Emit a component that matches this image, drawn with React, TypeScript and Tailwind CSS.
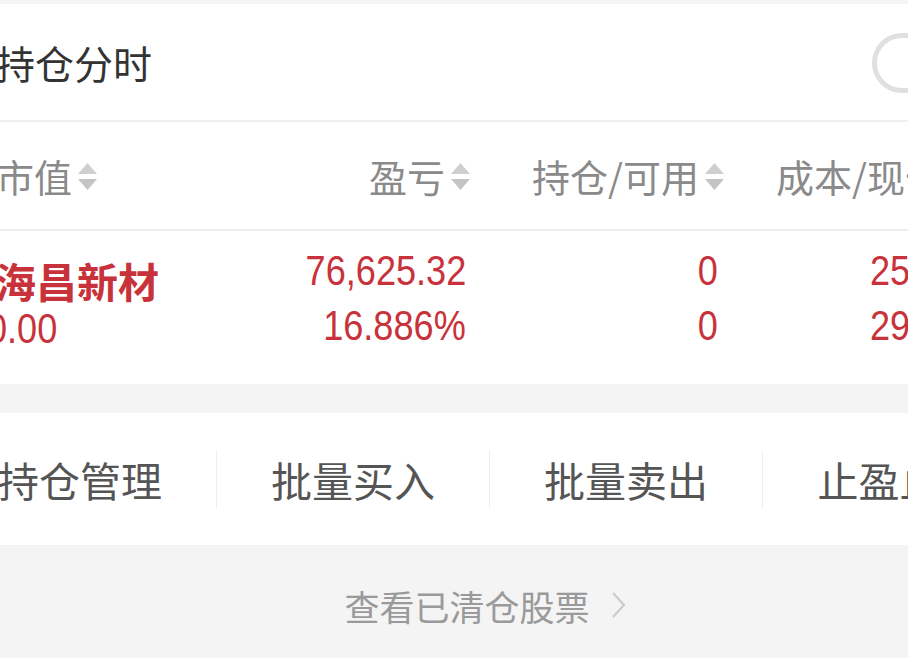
import React from "react";

const CJK = '"Noto Sans CJK SC", "Noto Sans", sans-serif';
const NUM = '"Liberation Sans", Arial, sans-serif';

function SortArrows() {
  return (
    <span className="inline-flex flex-col items-center gap-[5px] ml-[6px] mt-[2px]">
      <svg width="19" height="11" viewBox="0 0 19 11">
        <polygon points="9.5,0 19,11 0,11" fill="#cfcfcf" />
      </svg>
      <svg width="19" height="11" viewBox="0 0 19 11">
        <polygon points="0,0 19,0 9.5,11" fill="#c4c4c4" />
      </svg>
    </span>
  );
}

function HeaderCell({ label, className }: { label: string; className: string }) {
  return (
    <div className={`flex items-center shrink-0 ${className}`}>
      <span>{label}</span>
      <SortArrows />
    </div>
  );
}

function Num({ children, origin }: { children: React.ReactNode; origin: string }) {
  return (
    <span
      className={`inline-block whitespace-nowrap scale-x-[0.84] ${origin}`}
      style={{ fontFamily: NUM }}
    >
      {children}
    </span>
  );
}

export default function App() {
  return (
    <div
      className="w-[908px] h-[658px] overflow-hidden bg-[#f4f4f4] flex flex-col"
      style={{ fontFamily: CJK }}
    >
      <div className="h-[4px] shrink-0" />
      {/* 持仓分时 */}
      <div className="h-[116px] shrink-0 bg-white flex items-center justify-between border-b-2 border-[#efefef] box-content">
        <span className="text-[39px] leading-none text-[#333] ml-[-4px] whitespace-nowrap">持仓分时</span>
        <div className="w-[110px] h-[60px] rounded-full border-[5px] border-[#e0e0e0] bg-white shrink-0 mr-[-74px] mt-[2px]" />
      </div>

      {/* header */}
      <div className="h-[107px] shrink-0 bg-white flex items-center text-[38px] leading-none text-[#8a8a8a] border-b-2 border-[#ededed] box-content whitespace-nowrap">
        <HeaderCell label="市值" className="w-[200px] ml-[-4px]" />
        <HeaderCell label="盈亏" className="w-[274px] justify-end" />
        <HeaderCell label="持仓/可用" className="w-[254px] justify-end" />
        <div className="shrink-0 ml-[52px]">成本/现价</div>
      </div>

      {/* data row */}
      <div className="h-[153px] shrink-0 bg-white flex text-[#c8323a]">
        <div className="w-[200px] shrink-0 flex flex-col ml-[-5px]">
          <div className="mt-[29px] text-[41px] leading-none font-semibold whitespace-nowrap">
            海昌新材
          </div>
          <div className="mt-[2px] ml-[-8px] text-[43px] leading-none">
            <Num origin="origin-left">0.00</Num>
          </div>
        </div>
        <div className="w-[271px] shrink-0 flex flex-col items-end text-[43px] leading-none">
          <div className="mt-[14px]"><Num origin="origin-right">76,625.32</Num></div>
          <div className="mt-[8px]"><Num origin="origin-right">16.886%</Num></div>
        </div>
        <div className="w-[252px] shrink-0 flex flex-col items-end text-[43px] leading-none">
          <div className="mt-[14px]"><Num origin="origin-right">0</Num></div>
          <div className="mt-[8px]"><Num origin="origin-right">0</Num></div>
        </div>
        <div className="shrink-0 ml-[152px] flex flex-col text-[43px] leading-none">
          <div className="mt-[14px]"><Num origin="origin-left">25.11</Num></div>
          <div className="mt-[8px]"><Num origin="origin-left">29.35</Num></div>
        </div>
      </div>

      <div className="h-[29px] shrink-0" />

      {/* actions */}
      <div className="h-[132px] shrink-0 bg-white flex items-center ml-[-56px] w-[1092px]">
        {["持仓管理", "批量买入", "批量卖出", "止盈止损"].map((t, i) => (
          <div key={t} className="w-[273px] h-full shrink-0 flex items-center">
            <span className="flex-1 text-center text-[41px] leading-none text-[#555] whitespace-nowrap">{t}</span>
            {i < 3 && <div className="w-px h-[58px] bg-[#eeeeee] shrink-0" />}
          </div>
        ))}
      </div>

      {/* bottom link */}
      <div className="flex-1 flex justify-center pt-[40px]">
        <div className="flex items-center h-[40px] ml-[62px]">
          <span className="text-[35px] leading-none text-[#9a9a9a] whitespace-nowrap">查看已清仓股票</span>
          <svg width="16" height="30" viewBox="0 0 16 30" className="ml-[20px]">
            <polyline points="3,3 14,15 3,27" fill="none" stroke="#cccccc" strokeWidth="2.2" />
          </svg>
        </div>
      </div>
    </div>
  );
}
